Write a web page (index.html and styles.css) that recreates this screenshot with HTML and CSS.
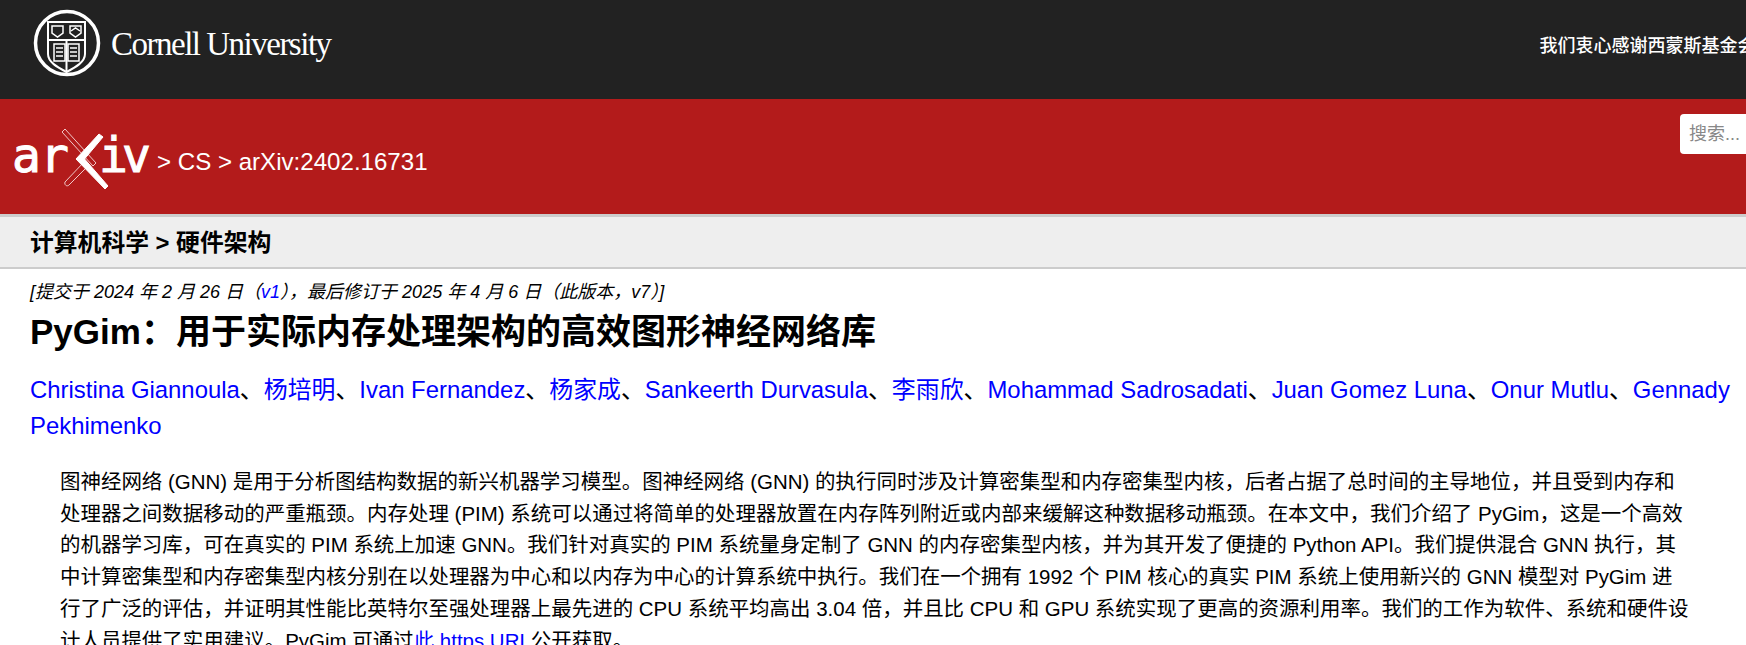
FILE: index.html
```html
<!DOCTYPE html>
<html lang="zh">
<head>
  <meta charset="UTF-8" />
  <title>PyGim：用于实际内存处理架构的高效图形神经网络库</title>
  <link rel="stylesheet" href="styles.css">
</head>
<body>
  <div class="cu-bar">
    <a class="cu-logo" href="#">
      <svg class="cu-seal" viewBox="0 0 68 68" width="68" height="68" fill="none" stroke="#fff">
        <circle cx="34" cy="34" r="31.5" stroke-width="3.5"/>
        <path d="M15 13H52V45C52 53 43 58 33.5 63C24 58 15 53 15 45Z" stroke-width="2"/>
        <path d="M15 31H52M33.5 31V63" stroke-width="2"/>
        <path d="M19 17H30V24L24.500 28L19 24Z" stroke-width="1.500"/>
        <path d="M37 17H48V24L42.500 28L37 24Z" stroke-width="1.500"/>
        <path d="M38 22L42.500 19L47 22" stroke-width="1.500"/>
        <path d="M21 35H32V52H21ZM35 35H46V52H35Z" stroke-width="1.500"/>
        <path d="M23 39H30M23 43H30M23 47H30M37 39H44M37 43H44M37 47H44" stroke-width="1.500"/>
      </svg>
      <span class="cu-name">Cornell University</span>
    </a>
    <p class="cu-thanks">我们衷心感谢西蒙斯基金会、成员机构和所有贡献者的支持。</p>
  </div>

  <header class="red-bar">
    <div class="crumbs">
      <a class="arxiv-logo" href="#">
        <span class="ar">ar</span>
        <svg class="arxiv-x" viewBox="0 0 46 62" width="46" height="62">
          <path d="M0 3L3 0L34 34L31 37Z" fill="none" stroke="#f0c8c8" stroke-width="1"/>
          <path d="M22 33L3 53C2 56 5 58 7 56L26 37" fill="none" stroke="#f0c8c8" stroke-width="1"/>
          <path d="M37 5L41 8L20 33L14 30Z" fill="#fff" stroke="#fff" stroke-linejoin="round"/>
          <path d="M14 30L20 27L46 57L43 60Z" fill="#fff" stroke="#fff" stroke-linejoin="round"/>
        </svg>
        <span class="iv">iv</span>
      </a>
      <span class="crumb-text">&gt; CS &gt; arXiv:2402.16731</span>
    </div>
    <input class="search" type="text" placeholder="搜索...">
  </header>

  <div class="subject"><h2>计算机科学 &gt; 硬件架构</h2></div>

  <main class="content">
    <div class="dateline">[提交于 2024 年 2 月 26 日（<a href="#">v1</a>），最后修订于 2025 年 4 月 6 日（此版本，v7）]</div>
    <h1 class="title">PyGim：用于实际内存处理架构的高效图形神经网络库</h1>
    <div class="authors">
      <a href="#">Christina Giannoula</a>、<a href="#">杨培明</a>、<a href="#">Ivan Fernandez</a>、<a href="#">杨家成</a>、<a href="#">Sankeerth Durvasula</a>、<a href="#">李雨欣</a>、<a href="#">Mohammad Sadrosadati</a>、<a href="#">Juan Gomez Luna</a>、<a href="#">Onur Mutlu</a>、<a href="#">Gennady Pekhimenko</a>
    </div>
    <blockquote class="abstract">
      图神经网络 (GNN) 是用于分析图结构数据的新兴机器学习模型。图神经网络 (GNN) 的执行同时涉及计算密集型和内存密集型内核，后者占据了总时间的主导地位，并且受到内存和处理器之间数据移动的严重瓶颈。内存处理 (PIM) 系统可以通过将简单的处理器放置在内存阵列附近或内部来缓解这种数据移动瓶颈。在本文中，我们介绍了 PyGim，这是一个高效的机器学习库，可在真实的 PIM 系统上加速 GNN。我们针对真实的 PIM 系统量身定制了 GNN 的内存密集型内核，并为其开发了便捷的 Python API。我们提供混合 GNN 执行，其中计算密集型和内存密集型内核分别在以处理器为中心和以内存为中心的计算系统中执行。我们在一个拥有 1992 个 PIM 核心的真实 PIM 系统上使用新兴的 GNN 模型对 PyGim 进行了广泛的评估，并证明其性能比英特尔至强处理器上最先进的 CPU 系统平均高出 3.04 倍，并且比 CPU 和 GPU 系统实现了更高的资源利用率。我们的工作为软件、系统和硬件设计人员提供了实用建议。PyGim 可通过<a href="#">此 https URL</a>公开获取。
    </blockquote>
  </main>
</body>
</html>
```

FILE: styles.css
```css
* { box-sizing: border-box; margin: 0; padding: 0; }
html, body { height: 100%; overflow: hidden; }
body {
  background: #fff;
  color: #000;
  font-family: "Liberation Sans", "Noto Sans CJK SC", sans-serif;
  font-size: 20px;
  width: 1746px;
}
a { color: #00f; text-decoration: none; }

/* Cornell bar */
.cu-bar {
  background: #222;
  height: 99px;
  display: flex;
  align-items: center;
  padding-left: 33px;
  overflow: hidden;
}
.cu-logo { display: flex; align-items: center; gap: 10px; margin-top: -13px; }
.cu-seal { flex: none; }
.cu-name {
  color: #fff;
  font-family: "Liberation Serif", serif;
  font-size: 33px;
  letter-spacing: -1.5px;
  white-space: nowrap;
  margin-top: 2px;
}
.cu-thanks {
  color: #fff;
  font-size: 18px;
  font-weight: 500;
  white-space: nowrap;
  margin-left: 1209px;
  margin-top: -11px;
}

/* red header */
.red-bar {
  background: #b31b1b;
  height: 115px;
  display: flex;
  align-items: flex-start;
  justify-content: space-between;
  padding: 15px 0 0 12px;
  overflow: hidden;
}
.crumbs { display: flex; align-items: center; margin-top: 15px; color: #fff; }
.arxiv-logo {
  display: flex;
  align-items: center;
  color: #fff;
  font-family: "DejaVu Sans Mono", monospace;
  font-size: 48px;
  width: 145px;
  -webkit-text-stroke: 1px #fff;
}
.ar { letter-spacing: -1px; margin-top: -10px; width: 50px; }
.iv { letter-spacing: -6px; margin-top: -10px; }
.arxiv-x { flex: none; margin-right: -9px; }
.crumb-text { font-size: 24.1px; margin-top: 3px; white-space: nowrap; }
.search {
  flex: none;
  width: 130px;
  height: 40px;
  margin-right: -64px;
  border: 0;
  border-radius: 4px;
  padding: 0 9px;
  font: 18px "Liberation Sans", "Noto Sans CJK SC", sans-serif;
  background: #fff;
}
.search::placeholder { color: #888; }

/* subject line */
.subject {
  background: #eee;
  border-top: 3px solid #ccc;
  border-bottom: 2px solid #ccc;
  height: 55px;
  padding: 0 30px 4px;
  display: flex;
  align-items: center;
}
.subject h2 { font-size: 23.8px; font-weight: 700; }

/* abstract area */
.content { padding: 12px 10px 0 30px; }
.dateline { font-size: 18px; font-style: italic; line-height: 22px; }
.title { font-size: 35px; font-weight: 700; line-height: 48px; margin-top: 5px; }
.authors { font-size: 23.9px; line-height: 36px; margin-top: 16px; }
.abstract { font-size: 20.48px; line-height: 31.7px; margin: 22px 45px 0 30px; }
```
